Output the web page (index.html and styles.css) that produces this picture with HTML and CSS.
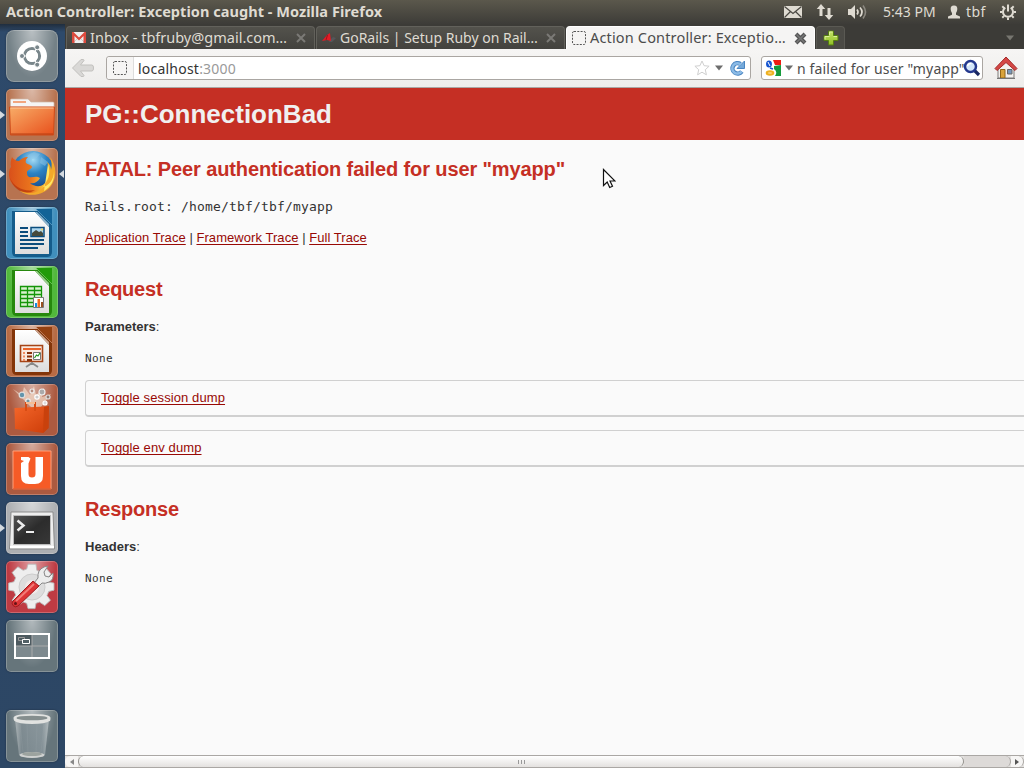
FILE: index.html
```html
<!DOCTYPE html>
<html lang="en">
<head>
<meta charset="utf-8">
<title>Action Controller: Exception caught</title>
<link rel="stylesheet" href="styles.css">
</head>
<body>
<svg width="0" height="0" class="defs">
  <defs>
    <linearGradient id="page" x1="0" y1="0" x2="0" y2="1"><stop offset="0" stop-color="#fff"/><stop offset="1" stop-color="#ddd"/></linearGradient>
    <linearGradient id="folder" x1="0" y1="0" x2="1" y2="1"><stop offset="0" stop-color="#f8ad68"/><stop offset="1" stop-color="#e84f1b"/></linearGradient>
    <radialGradient id="globe" cx=".5" cy=".2" r=".8"><stop offset="0" stop-color="#a6dcf5"/><stop offset=".4" stop-color="#2b83c4"/><stop offset="1" stop-color="#123a7c"/></radialGradient>
    <linearGradient id="fox" x1="0" y1="0" x2="1" y2="0"><stop offset="0" stop-color="#d9501b"/><stop offset=".6" stop-color="#ea741d"/><stop offset="1" stop-color="#f9c53c"/></linearGradient>
    <linearGradient id="bag" x1="0" y1="0" x2="1" y2="1"><stop offset="0" stop-color="#f4662a"/><stop offset="1" stop-color="#cc3c08"/></linearGradient>
    <linearGradient id="screen" x1="0" y1="0" x2="1" y2="1"><stop offset="0" stop-color="#555"/><stop offset=".5" stop-color="#2c2c2c"/><stop offset="1" stop-color="#383838"/></linearGradient>
    <linearGradient id="glass" x1="0" y1="0" x2="1" y2="0"><stop offset="0" stop-color="#b5bcbe"/><stop offset=".2" stop-color="#7d8a90"/><stop offset=".8" stop-color="#87949a"/><stop offset="1" stop-color="#bcc3c5"/></linearGradient>
    <linearGradient id="green" x1="0" y1="0" x2="0" y2="1"><stop offset="0" stop-color="#c6e36a"/><stop offset="1" stop-color="#8fbf23"/></linearGradient>
  </defs>
</svg>
<div class="desktop">
  <header class="panel">
    <span class="panel-title">Action Controller: Exception caught - Mozilla Firefox</span>
    <div class="indicators">
      <svg class="ind-mail" width="20" height="14" viewBox="0 0 20 14"><path d="M1 1h18v12H1z" fill="#dfdbd2"/><path d="M1.500 1.500 10 8.500l8.500-7M1.500 12.500l6-6M18.500 12.500l-6-6" fill="none" stroke="#4a4842" stroke-width="1.200"/></svg>
      <svg class="ind-net" width="18" height="18" viewBox="0 0 18 18"><path d="M5 1 9.300 6H6.500v7h-3V6H.7zM13 17l4.300-5h-2.800V5h-3v7H8.700z" fill="#dfdbd2"/></svg>
      <svg class="ind-sound" width="21" height="16" viewBox="0 0 21 16"><path d="M1 5h3l4-4v14l-4-4H1z" fill="#dfdbd2"/><path d="M10 5.500q2 2.500 0 5M13 3.500q4 4.500 0 9" fill="none" stroke="#dfdbd2" stroke-width="1.700"/><path d="M16 1.500q5 6.500 0 13" fill="none" stroke="#8b8880" stroke-width="1.600"/></svg>
      <span class="clock">5:43 PM</span>
      <svg class="ind-user" width="14" height="14" viewBox="0 0 14 14"><path d="M7 .5c2.600 0 3.500 1.600 3.300 3.800C10.100 6.500 9.300 7.500 9 8v1.800l4 1.700V13.500H1v-2l4-1.700V8C4.700 7.500 3.900 6.500 3.700 4.300 3.500 2.100 4.400.5 7 .5z" fill="#dfdbd2"/></svg>
      <span class="user">tbf</span>
      <svg class="ind-gear" width="18" height="18" viewBox="0 0 18 18" fill="none" stroke="#dfdbd2"><path d="M6.300 4.600A5 5 0 1 0 11.700 4.600" stroke-width="2"/><path d="M9 1.500v7" stroke-width="2"/><path d="M1 9h2.500M14.500 9H17M9 14.500V17M3.300 3.300l1.800 1.800M14.700 3.300l-1.800 1.800M3.300 14.700l1.800-1.800M14.700 14.700l-1.800-1.800" stroke-width="2"/></svg>
    </div>
  </header>

  <div class="workspace">
    <nav class="launcher">
      <div class="tile tile-dash"><svg viewBox="0 0 52 52"><circle cx="26" cy="26" r="15" fill="#fff"/><circle cx="26" cy="26" r="7.600" fill="none" stroke="#79868b" stroke-width="3"/><path d="M26 26H16M26 26l5.500-9M26 26l5.500 9" stroke="#fff" stroke-width="1.200"/><circle cx="26" cy="26" r="6" fill="#fff"/><g fill="#79868b" stroke="#fff" stroke-width="1"><circle cx="16" cy="26" r="2.500"/><circle cx="31.200" cy="17.300" r="2.500"/><circle cx="31.200" cy="34.700" r="2.500"/></g></svg></div>
      <div class="tile tile-orange running"><svg viewBox="0 0 52 52"><path d="M4.500 18V11q0-1 1-1H22l3 3h22q1 0 1 1v5z" fill="#f5f5f5" stroke="#cfb8a8" stroke-width=".7"/><path d="M7 13h13" stroke="#f1a67f" stroke-width="2"/><path d="M3.500 18h45l-1 28h-43z" fill="url(#folder)" stroke="#cf4b19"/><path d="M4.500 19h43" stroke="#fbc79d"/><path d="M5 45h42" stroke="#b83e12"/></svg></div>
      <div class="tile tile-orange running focused"><svg viewBox="0 0 52 52"><circle cx="27" cy="24.500" r="21.500" fill="url(#globe)"/><path d="M22 7l6-3 6 2-3 4-5 1-1 4-5-3zM35 9l7 5-3 4-5-3z" fill="#8cc6e8" opacity=".5"/><path d="M44 9c7 9 7 21 1 29-7 9-21 12-31 5l6-4c12 4 21-2 22-12 1-4 1-9-1-13 3 2 4 5 4 8 1-4 1-8-1-13z" fill="#f3a92a"/><path d="M42 16c3 8 1 19-8 24 10-2 14-9 14-17 1 9-3 16-10 20" fill="#ffe766"/><path d="M6 9c1 2 4 4 7 4 2-2 5-4 9-4-2 2-3 4-2 6 3 2 6 2 6 4s-5 3-5 5 0 4 2 5c4 1 7-2 11 1-2 4-6 6-10 5 4 4 11 4 15 1-3 7-12 11-20 8C8 41 2 33 3 24q0-3 2-5c-1-4 0-7 1-10z" fill="url(#fox)"/><path d="M4 30c4 9 13 14 25 12-9 6-21 1-25-12z" fill="#b7350d" opacity=".75"/></svg></div>
      <div class="tile tile-blue"><svg viewBox="0 0 52 52"><path d="M6 4h27l13 14v27q0 5-5 5H11q-5 0-5-5z" fill="#155c8b"/><path d="M30 2h16v16z" fill="#126397"/><path d="M30 2l16 16" stroke="#5b9dc4" stroke-width=".8"/><path d="M9 5h20l14 15v27H9z" fill="url(#page)"/><path d="M29 5l14 15V17L31 5z" fill="#8fb6cf"/><g stroke="#0b4c7c" stroke-width="2"><path d="M14 21h8M14 25h8M14 29h8M14 33h24M14 37h24M14 41h18"/></g><path d="M25 20.500h13v9H25z" fill="#aed7ef" stroke="#0b4c7c" stroke-width="1.500"/><path d="M26 29v-3l4-3 3 2 2-1 2 2v3z" fill="#464a3c"/><circle cx="36" cy="22.500" r="1" fill="#ffd34d"/></svg></div>
      <div class="tile tile-green"><svg viewBox="0 0 52 52"><path d="M6 4h27l13 14v27q0 5-5 5H11q-5 0-5-5z" fill="#26880d"/><path d="M30 2h16v16z" fill="#229b09"/><path d="M30 2l16 16" stroke="#72ca60" stroke-width=".8"/><path d="M9 5h20l14 15v27H9z" fill="url(#page)"/><path d="M29 5l14 15V17L31 5z" fill="#9ccf90"/><path d="M14.500 20.500h21v20h-21z" fill="#d8f2ce"/><path d="M14.500 20.500h21v20h-21zM14 24.500h22M14 28.500h22M14 32.500h22M14 36.500h22M21.500 20v21M28.500 20v21" fill="none" stroke="#149508" stroke-width="1.300"/><path d="M27.500 31.500h10v10h-10z" fill="#fff" stroke="#777"/><path d="M29 37h2v4h-2z" fill="#128fe0"/><path d="M31.500 33h2.500v8h-2.500z" fill="#f36a1d"/><path d="M35 36h2v5h-2z" fill="#985020"/></svg></div>
      <div class="tile tile-brown"><svg viewBox="0 0 52 52"><path d="M6 4h27l13 14v27q0 5-5 5H11q-5 0-5-5z" fill="#833509"/><path d="M30 2h16v16z" fill="#944111"/><path d="M30 2l16 16" stroke="#cb8c6a" stroke-width=".8"/><path d="M9 5h20l14 15v27H9z" fill="url(#page)"/><path d="M29 5l14 15V17L31 5z" fill="#ceaa95"/><path d="M14.500 20.500h22v16h-22z" fill="#f9e9df" stroke="#a54417" stroke-width="1.600"/><path d="M17 24h18" stroke="#ea642b" stroke-width="2"/><path d="M17 28h2M17 31.500h2M17 35h2" stroke="#f08b60" stroke-width="2"/><path d="M21 28h5M21 31.500h5M21 35h5" stroke="#8a3109" stroke-width="2"/><path d="M27.500 27.500h7v7h-7z" fill="#fff" stroke="#777"/><path d="M28.500 33l2-3 1.500 1 2-3" fill="none" stroke="#22971c" stroke-width="1.200"/><path d="M26 37v3M26 38l-6 4M26 38l6 4" stroke="#888" stroke-width="1.800"/></svg></div>
      <div class="tile tile-rust"><svg viewBox="0 0 52 52"><path d="M26 24L7 5l9 6 2-8 6 8 4-9 2 9 8-7-2 9 9-3-10 13z" fill="#fff1de" opacity=".55"/><g stroke-width="1.200"><circle cx="16" cy="11" r="2.800" fill="#6295ac" stroke="#ddd"/><circle cx="36" cy="8" r="3" fill="#aaa" stroke="#eee"/><circle cx="42" cy="13" r="2" fill="#917b71" stroke="#ddd"/><circle cx="22" cy="17" r="2.200" fill="#7596a0" stroke="#eee"/><circle cx="31" cy="13" r="2.200" fill="#ccc" stroke="#fff"/><circle cx="26" cy="7" r="2" fill="#b78d7e" stroke="#eee"/><circle cx="39" cy="19" r="2" fill="#ddd" stroke="#fff"/></g><path d="M8.500 24l30-1.500L43 22l-.5 22-5.500 5-28-4z" fill="url(#bag)"/><path d="M43 22l-.5 22-5.500 5 1-26z" fill="#c9410c"/><path d="M20 27v-8h9v8" fill="none" stroke="#d84c14" stroke-width="2"/><path d="M20 19h9" stroke="#ffe3bf" stroke-width="1.500"/></svg></div>
      <div class="tile tile-rust"><svg viewBox="0 0 52 52"><path d="M7 8h38v38H7z" fill="#f65b27" stroke="#ffa07a"/><path d="M7 46h38" stroke="#cf4519"/><path d="M15 14h7.500l2 1.500-2 5V31q0 3.500 3.500 3.500t3.500-3.500V14H37v19q0 8-8 8h-6q-8 0-8-8V20l3-2-3-1z" fill="#fff"/></svg></div>
      <div class="tile tile-silver running"><svg viewBox="0 0 52 52"><path d="M5 10h42l1.500 37h-45z" fill="#eee" stroke="#8b8b8b"/><path d="M7.500 13.500h37v29h-37z" fill="url(#screen)" stroke="#bbb"/><path d="M4 45h44" stroke="#fff" stroke-width="2"/><path d="M11.500 18.500l6 5-6 5" fill="none" stroke="#eee" stroke-width="2.500"/><path d="M20 30h8" stroke="#eee" stroke-width="2"/></svg></div>
      <div class="tile tile-red"><svg viewBox="0 0 52 52"><g transform="translate(3.100 2.300) scale(.88)" fill="#eee" stroke="#bbb" stroke-width="1"><path d="M21.500 1h9l1 7 4 1.500 6-4.500 6 7-4 5.500 1.500 4 6 1v8l-6 1.500-2 4.500 4 5.500-6.500 6-6-4-4 1.500-1 6h-8l-1.500-6-4-1.500-6 4-6.500-6 4-6-2-4.500-6-1v-8l6-1.500 2-4.500-4-6 6.500-6.500 6 4 4-1.500z"/></g><circle cx="26" cy="26" r="13" fill="#ddd" stroke="#ccc"/><circle cx="26" cy="26" r="7" fill="#f1e9e8"/><path d="M28 22l4-5q-1-8 6-11l4-1-4 6 1 4 4 1 4-4q1 7-4 9-4 2-7 1l-4 4z" fill="#ededed" stroke="#888"/><path d="M7 40l20-20 6 5-21 20q-3 2-5-.5T7 40z" fill="#dd3436" stroke="#9f1d20"/><path d="M10 40l18-17" stroke="#f27b77" stroke-width="2"/><circle cx="9.500" cy="42.500" r="1.500" fill="#671416"/></svg></div>
      <div class="tile tile-slate"><svg viewBox="0 0 52 52"><path d="M9 14h34v24H9z" fill="#7d898e"/><path d="M9 14h17v12H9z" fill="#4d5a60"/><path d="M26 14v24M9 26h34" stroke="#aaa"/><path d="M9 14h34v24H9z" fill="none" stroke="#fff" stroke-width="2"/><path d="M12.500 17.500h6v3h-6z" fill="none" stroke="#999"/><path d="M16.500 19.500h7v4h-7z" fill="#526066" stroke="#fff"/></svg></div>
      <div class="tile tile-slate tile-trash"><svg viewBox="0 0 52 52"><path d="M9 9h34l-4 36q-13 6-26 0z" fill="url(#glass)" opacity=".85"/><ellipse cx="26" cy="45" rx="12.500" ry="3" fill="#cfd1d0"/><ellipse cx="26" cy="44" rx="10" ry="2" fill="#9ca39f"/><path d="M14 14l3 28M21 14l1 28M31 14l-1 28M38 14l-3 28" stroke="#a0aaae" opacity=".2"/><path d="M7.500 8q0-4 18.500-4t18.500 4-1 3q-4 3-17.500 3T8.500 11q-1-1-1-3z" fill="#e1e2e0"/><ellipse cx="26" cy="8" rx="15.500" ry="2.300" fill="#858e8e"/></svg></div>
    </nav>

    <main class="browser">
      <div class="tabs">
        <div class="tab">
          <svg class="favicon" width="14" height="12" viewBox="0 0 14 12"><path d="M0 0h14v11H0z" fill="#eee"/><path d="M2 10l5-5 5 5" fill="none" stroke="#ccc"/><path d="M0 11V0h1.500L7 5.500 12.500 0H14v11h-2.500V4L7 8.500 2.500 4v7z" fill="#dc4a3d"/></svg>
          <span class="tab-label label-inbox">Inbox - tbfruby@gmail.com…</span>
          <svg class="tab-close" width="12" height="12" viewBox="0 0 12 12"><path d="M2 2l8 8M10 2l-8 8" stroke="#7b7a76" stroke-width="2"/></svg>
        </div>
        <div class="tab">
          <svg class="favicon" width="14" height="12" viewBox="0 0 14 12"><path d="M8 8l3-3 3 1-4 4H7z" fill="#55565a"/><path d="M0 9l5-6 3-2 1 8-4-1z" fill="#e21b26"/><path d="M4 8l1.500-5" stroke="#8f1118" stroke-width=".8"/></svg>
          <span class="tab-label label-gorails">GoRails | Setup Ruby on Rail…</span>
          <svg class="tab-close" width="12" height="12" viewBox="0 0 12 12"><path d="M2 2l8 8M10 2l-8 8" stroke="#7b7a76" stroke-width="2"/></svg>
        </div>
        <div class="tab tab-active">
          <svg class="favicon" width="14" height="14" viewBox="0 0 14 14"><rect x=".5" y=".5" width="13" height="13" rx="1.500" fill="none" stroke="#555" stroke-dasharray="2 1.300"/></svg>
          <span class="tab-label label-action">Action Controller: Exceptio…</span>
          <svg class="tab-close" width="13" height="13" viewBox="0 0 13 13"><path d="M2 2l9 9M11 2l-9 9" stroke="#555" stroke-width="4"/><path d="M2.500 2.500l8 8M10.500 2.500l-8 8" stroke="#777" stroke-width="1.500"/></svg>
        </div>
        <div class="tab-new"><svg width="16" height="16" viewBox="0 0 16 16"><path d="M5.500 1h5v4.500H15v5h-4.500V15h-5v-4.500H1v-5h4.500z" fill="url(#green)" stroke="#557d13"/><path d="M6.500 5V2h3M2 9.500v-3h4.500M10.500 6.500H14" fill="none" stroke="#dcf09b"/></svg></div>
        <svg class="tab-list" width="8" height="6" viewBox="0 0 8 6"><path d="M0 .5h8L4 5.500z" fill="#777670"/></svg>
      </div>

      <div class="toolbar">
        <svg class="back" width="24" height="20" viewBox="0 0 24 20"><path d="M10 1.500h2q1 0 1 1L9.500 7H21q1.500 0 1.500 3T21 13H9.500l3.500 4.500q0 1-1 1h-2L1.500 10z" fill="#d9d8d6" stroke="#c2c1be"/></svg>
        <div class="urlbar">
          <div class="identity"><svg width="14" height="14" viewBox="0 0 14 14"><rect x=".5" y=".5" width="13" height="13" rx="1.500" fill="none" stroke="#555" stroke-dasharray="2 1.300"/></svg></div>
          <span class="url">localhost<span class="port">:3000</span></span>
          <svg class="star" width="16" height="16" viewBox="0 0 16 16"><path d="M8 1l2.100 4.700 5 .5-3.800 3.500 1.100 5.100L8 12.200l-4.400 2.600 1.100-5.100L.9 6.200l5-.5z" fill="#fff" stroke="#cfcfcf"/></svg>
          <svg class="drop" width="8" height="6" viewBox="0 0 8 6"><path d="M0 .5h8L4 5.500z" fill="#6d6d6d"/></svg>
          <svg class="reload" width="17" height="17" viewBox="0 0 17 17"><path d="M12.800 11.500A5.200 5.200 0 1 1 11.500 4" fill="none" stroke="#4b86c2" stroke-width="4.400"/><path d="M15.500 1v7.500H8z" fill="#74a9da" stroke="#4b86c2"/><path d="M12.600 11.500A5.200 5.200 0 1 1 12 4.600" fill="none" stroke="#8cbbe6" stroke-width="2.500"/></svg>
        </div>
        <div class="searchbar">
          <svg class="google" width="16" height="16" viewBox="0 0 16 16"><path d="M0 0h16v16H0z" fill="#fff"/><path d="M8 0h8v5h-6z" fill="#ee1c12"/><path d="M9 6l7-1v11h-6q3-4-1-7z" fill="#169b3c"/><ellipse cx="4" cy="4" rx="2.200" ry="2.800" fill="#1655d0" stroke="#1655d0" stroke-width="1.500"/><path d="M3 2l2 4" stroke="#fff" stroke-width="1"/><path d="M5 8l3 1" stroke="#1655d0" stroke-width="1.800"/><ellipse cx="5" cy="13" rx="3.300" ry="1.800" fill="#fbd98b" stroke="#eeb020" stroke-width="2"/></svg>
          <svg class="drop" width="8" height="6" viewBox="0 0 8 6"><path d="M0 .5h8L4 5.500z" fill="#6d6d6d"/></svg>
          <span class="query">n failed for user "myapp"</span>
          <svg class="magnifier" width="18" height="18" viewBox="0 0 18 18"><path d="M11.500 11.500l4.500 4.500" stroke="#192761" stroke-width="3.200"/><circle cx="7.500" cy="7.500" r="5.500" fill="#d3e6fa" stroke="#24388d" stroke-width="2.500"/><path d="M4.500 7q1-3 4-2.500" fill="none" stroke="#fff" stroke-width="1.500"/></svg>
        </div>
        <svg class="home" width="24" height="24" viewBox="0 0 24 24"><path d="M4 12l8-8 8 8v10H4z" fill="#f2f1ef" stroke="#7c7b78"/><path d="M6.500 13.500H11V22H6.500z" fill="#d9a33a" stroke="#91661a"/><path d="M13.500 13.500h4.500v4.500h-4.500z" fill="#7698bb" stroke="#666"/><path d="M1 12.500L12 1l11 11.500-2 2L12 6.500 3 14.500z" fill="#d44745" stroke="#a32b2b"/><path d="M3 22.500h18" stroke="#777"/></svg>
      </div>

      <div class="viewport">
        <div class="page-header"><h1>PG::ConnectionBad</h1></div>
        <div class="container">
          <h2 class="message">FATAL: Peer authentication failed for user "myapp"</h2>
          <p class="root"><code>Rails.root: /home/tbf/tbf/myapp</code></p>
          <p class="traces"><a>Application Trace</a> | <a>Framework Trace</a> | <a>Full Trace</a></p>
          <h2 class="section">Request</h2>
          <p class="field"><b>Parameters</b>:</p>
          <pre>None</pre>
          <div class="details"><a>Toggle session dump</a></div>
          <div class="details"><a>Toggle env dump</a></div>
          <h2 class="section">Response</h2>
          <p class="field"><b>Headers</b>:</p>
          <pre>None</pre>
        </div>
      </div>

      <div class="scrollbar">
        <div class="scroll-btn"><svg width="4" height="6" viewBox="0 0 4 6"><path d="M4 0v6L0 3z" fill="#888"/></svg></div>
        <div class="scroll-thumb"><i></i><i></i><i></i></div>
        <div class="scroll-track"></div>
        <div class="scroll-btn scroll-btn-right"><svg width="4" height="6" viewBox="0 0 4 6"><path d="M0 0v6l4-3z" fill="#555"/></svg></div>
      </div>
    </main>
  </div>
  <svg class="cursor" width="14" height="22" viewBox="0 0 14 22"><path d="M1.500 1.500v16l3.700-3.500 2.500 5.500 2.800-1.200-2.500-5.300h5z" fill="#fff" stroke="#111" stroke-width="1.200"/></svg>
</div>
</body>
</html>
```
FILE: styles.css
```css
* { box-sizing: border-box; }
body { margin: 0; font-family: "Noto Sans", "Open Sans", sans-serif; }
svg { display: block; flex: none; }
.defs { position: absolute; }
.desktop { position: relative; width: 1024px; height: 768px; overflow: hidden; display: flex; flex-direction: column; }

.panel { height: 24px; flex: none; display: flex; align-items: center; justify-content: space-between; padding: 0 7px 0 6px; background: linear-gradient(#5b584c, #3d3c38); color: #dfdbd2; font-size: 14px; line-height: 24px; white-space: nowrap; }
.panel-title { font-weight: bold; font-size: 14.5px; letter-spacing: .05px; padding-bottom: 2px; line-height: 22px; }
.indicators { display: flex; align-items: center; }
.ind-net { margin-left: 13px; }
.ind-sound { margin-left: 13px; }
.clock { width: 53px; margin-left: 15px; letter-spacing: 0; }
.ind-user { margin-left: 11px; }
.user { width: 21px; margin-left: 5px; letter-spacing: .4px; }
.ind-gear { margin-left: 12px; }

.workspace { flex: 1; display: flex; min-height: 0; }
.launcher { width: 65px; flex: none; display: flex; flex-direction: column; gap: 7px; padding: 6px 0 6px 6px; background: linear-gradient(#202e3e, #2e4a6b 8px, #2c4665 60%, #2d4765); }
.tile { position: relative; width: 52px; height: 52px; border-radius: 5px; flex: none; border: 1px solid rgba(255,255,255,.22); box-shadow: 0 0 2px rgba(0,0,0,.4); background-image: radial-gradient(ellipse at 50% 0, rgba(255,255,255,.5), rgba(255,255,255,0) 65%); background-origin: border-box; }
.tile svg { width: 52px; height: 52px; margin: -1px; }
.tile-dash { background-color: #748187; border-radius: 8px; }
.tile-orange { background-color: #b77350; }
.tile-blue { background-color: #408fbd; }
.tile-green { background-color: #51b83c; }
.tile-brown { background-color: #b76b44; }
.tile-rust { background-color: #ac5a40; }
.tile-silver { background-color: #adafb2; }
.tile-red { background-color: #be3b43; }
.tile-slate { background-color: #66757b; }
.tile-trash { margin-top: auto; }
.running::after { content: ""; position: absolute; left: -7px; top: 21px; border: 4px solid transparent; border-left: 5px solid #d4dae0; border-right: 0; }
.focused::before { content: ""; position: absolute; right: -7px; top: 21px; border: 4px solid transparent; border-right: 5px solid #d4dae0; border-left: 0; }

.browser { flex: 1; min-width: 0; display: flex; flex-direction: column; }
.tabs { height: 25px; flex: none; display: flex; background: #3c3b37; padding-left: 1px; }
.tab { width: 249px; height: 23px; margin: 2px 1px 0 0; display: flex; align-items: center; padding: 0 7px 0 5px; border: 1px solid #62615b; border-bottom: 0; border-radius: 4px 4px 0 0; background: linear-gradient(#53524c, #43423e); color: #dfdbd2; font-size: 14px; }
.tab-active { background: #f5f4f3; color: #4c4c4c; border-color: #fff; }
.tab-label { margin-left: 4px; flex: 1; white-space: nowrap; line-height: 20px; }
.label-inbox { font-size: 14.5px; padding-bottom: 2px; }
.label-action { font-size: 14.5px; letter-spacing: .16px; padding-bottom: 2px; }
.tab-new { width: 29px; height: 23px; margin-top: 2px; border: 1px solid #5a5953; border-bottom: 0; border-radius: 4px 4px 0 0; background: #4b4a45; display: flex; align-items: center; justify-content: center; }
.tab-list { margin: 11px 10px 0 auto; }

.toolbar { height: 39px; flex: none; display: flex; align-items: center; background: linear-gradient(#f6f5f4, #eeedeb); border-bottom: 1px solid #aaa7a4; padding: 0 6px; font-size: 14px; color: #4c4c4c; }
.back { margin-right: 11px; }
.urlbar, .searchbar { height: 24px; background: #fff; border: 1px solid #aaa6a2; border-radius: 3px; display: flex; align-items: center; white-space: nowrap; }
.urlbar { width: 645px; }
.identity { width: 27px; height: 22px; display: flex; align-items: center; justify-content: center; background: #f6f5f4; border-right: 1px solid #ddd; border-radius: 3px 0 0 3px; }
.url { margin-left: 4px; flex: 1; color: #333; letter-spacing: .22px; }
.port { color: #999; }
.drop { margin-left: 5px; }
.reload { margin: 0 4px 0 6px; }
.searchbar { width: 222px; margin-left: 10px; padding-left: 3px; }
.searchbar .drop { margin-left: 4px; }
.query { width: 166px; margin-left: 4px; letter-spacing: .15px; }
.home { margin-left: 11px; }

.viewport { flex: 1; min-height: 0; overflow: hidden; background: #fafafa; color: #333; font: 13px/18px "Liberation Sans", Arial, sans-serif; }
.page-header { height: 52px; background: #c52f24; color: #f0f0f0; padding: 8px 20px; }
h1 { margin: 0; font-size: 26px; line-height: 36px; }
h2 { margin: 0; font-size: 20px; line-height: 25px; color: #c52f24; white-space: nowrap; letter-spacing: -.12px; }
.container { width: 1000px; padding: 17px 0 0 20px; }
p { margin: 0; }
.root { margin-top: 17px; height: 18px; }
code { font: 13px/18px "DejaVu Sans Mono", monospace; letter-spacing: .17px; }
.traces { margin-top: 13px; height: 18px; letter-spacing: .03px; }
a { color: #980905; letter-spacing: .06px; text-decoration: underline; text-decoration-thickness: 1px; text-underline-offset: 2px; text-decoration-skip-ink: none; }
.details a { letter-spacing: .1px; }
.section { margin-top: 30px; letter-spacing: -.22px; }
.message { height: 24px; }
.field { margin-top: 16px; height: 18px; }
pre { margin: 14px 0 -1px; height: 18px; font: 11px/18px "DejaVu Sans Mono", monospace; letter-spacing: .38px; }
.details { height: 37px; margin-top: 13px; padding: 8px 15px; border: 1px solid #d0d0d0; border-bottom-width: 2px; border-radius: 4px; }

.scrollbar { height: 13px; flex: none; display: flex; background: #e4e2e0; border-top: 1px solid #aaa7a4; border-bottom: 1px solid #aaa7a4; }
.scroll-btn { width: 13px; display: flex; align-items: center; justify-content: center; background: #f6f5f4; border-radius: 6px 0 0 6px; }
.scroll-thumb { width: 886px; border: 1px solid #94918d; border-top: 0; border-bottom: 0; border-radius: 6px; background: linear-gradient(#fff, #e3e1df); display: flex; gap: 2px; align-items: center; justify-content: center; }
.scroll-thumb i { width: 1px; height: 4px; background: #999; }
.scroll-track { flex: 1; background: #dddad8; border-right: 1px solid #aaa7a4; border-radius: 0 6px 6px 0; }
.scroll-btn-right { border-right: 1px solid #aaa7a4; border-radius: 0 6px 6px 0; width: 13px; }

.cursor { position: absolute; left: 602px; top: 168px; }
```
